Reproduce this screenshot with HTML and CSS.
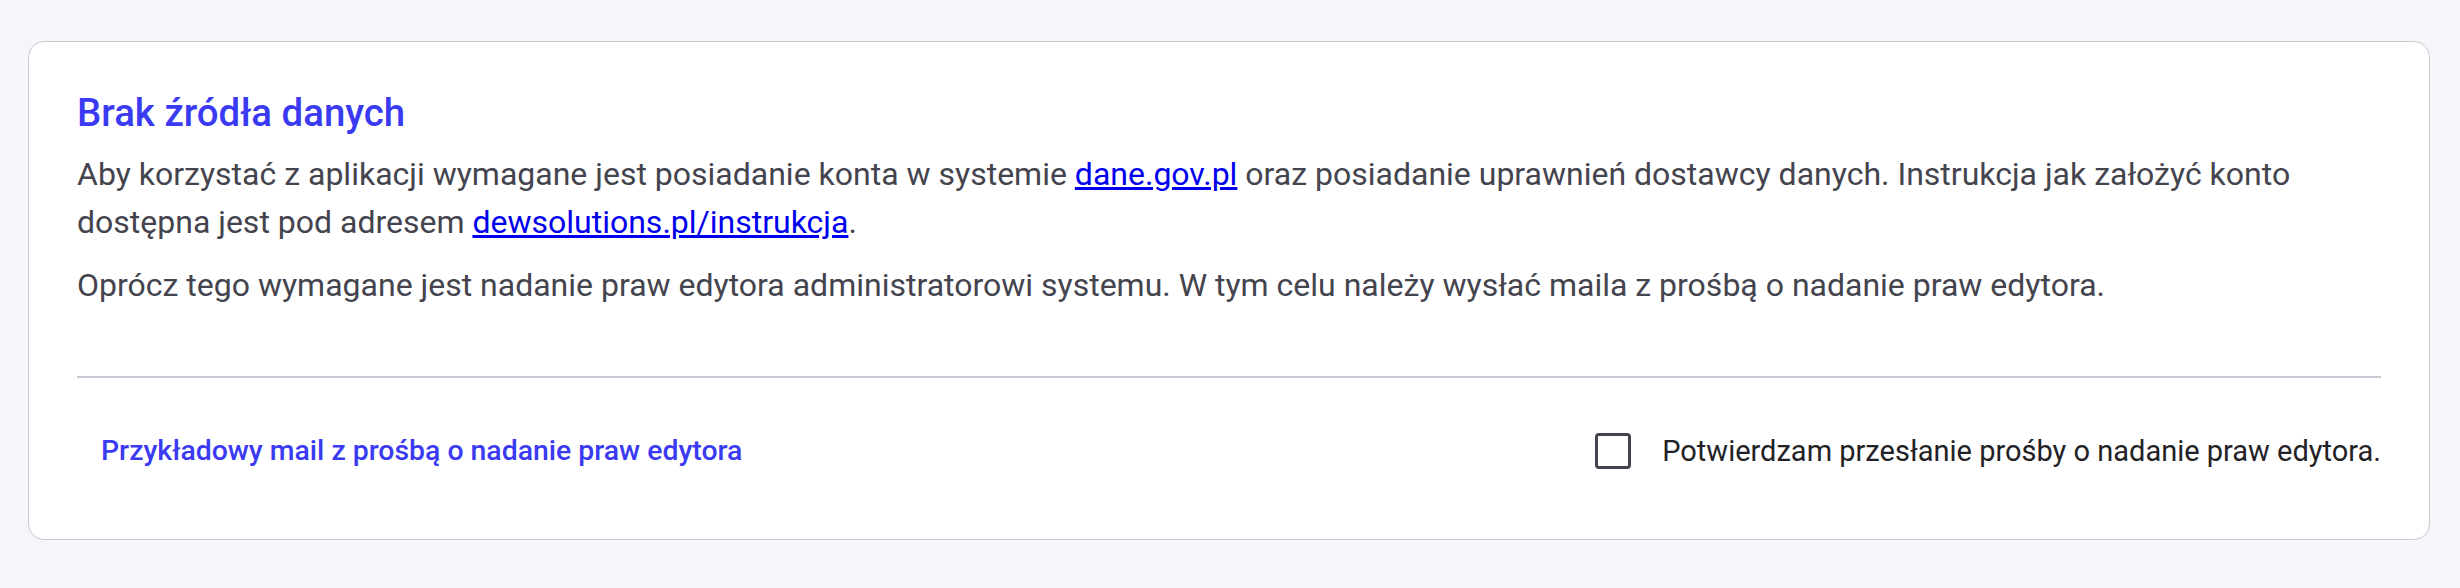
FILE: index.html
```html
<!DOCTYPE html>
<html lang="pl">
<head>
<meta charset="utf-8">
<title>Brak źródła danych</title>
<link rel="stylesheet" href="styles.css">
</head>
<body>
<main class="page">
  <section class="card">
    <div class="card-body">
      <h2 class="title">Brak źródła danych</h2>
      <p class="text">Aby korzystać z aplikacji wymagane jest posiadanie konta w systemie <a href="#">dane.gov.pl</a> oraz posiadanie uprawnień dostawcy danych. Instrukcja jak założyć konto dostępna jest pod adresem <a href="#">dewsolutions.pl/instrukcja</a>.</p>
      <p class="text text-second">Oprócz tego wymagane jest nadanie praw edytora administratorowi systemu. W tym celu należy wysłać maila z prośbą o nadanie praw edytora.</p>
    </div>
    <div class="divider"></div>
    <div class="card-footer">
      <button class="text-button" type="button">Przykładowy mail z prośbą o nadanie praw edytora</button>
      <label class="check">
        <span class="check-box"></span>
        <span class="check-label">Potwierdzam przesłanie prośby o nadanie praw edytora.</span>
      </label>
    </div>
  </section>
</main>
</body>
</html>
```

FILE: styles.css
```css
html, body {
  margin: 0;
  padding: 0;
}
body {
  background: #f5f6fa;
  font-family: Roboto, "Noto Sans", sans-serif;
  color: #44444e;
}
.page {
  padding: 41px 30px 0 28px;
}
.card {
  background: #fff;
  border: 1px solid #c8c8d0;
  border-radius: 16px;
  padding: 0 48px;
}
.card-body {
  padding-top: 48px;
  padding-bottom: 67px;
}
.title {
  margin: 0 0 15px 0;
  font-size: 38.4px;
  line-height: 45px;
  font-weight: 500;
  color: #3a3af2;
}
.text {
  margin: 0;
  font-size: 32px;
  line-height: 48px;
}
.text-second {
  margin-top: 15px;
}
.text a {
  color: #0000ee;
  text-decoration: underline;
}
.divider {
  height: 2px;
  background: #c8c8d2;
}
.card-footer {
  display: flex;
  justify-content: space-between;
  align-items: center;
  padding: 55px 0 70px 0;
}
.text-button {
  border: 0;
  background: none;
  padding: 0 24px;
  font-family: Roboto, "Noto Sans", sans-serif;
  font-size: 28.4px;
  line-height: 36px;
  font-weight: 500;
  color: #3a3af2;
  cursor: pointer;
}
.check {
  display: flex;
  align-items: center;
  gap: 31px;
}
.check-box {
  width: 30px;
  height: 30px;
  border: 3px solid #44444e;
  border-radius: 4px;
}
.check-label {
  font-size: 29px;
  line-height: 36px;
  color: #222226;
}
```
